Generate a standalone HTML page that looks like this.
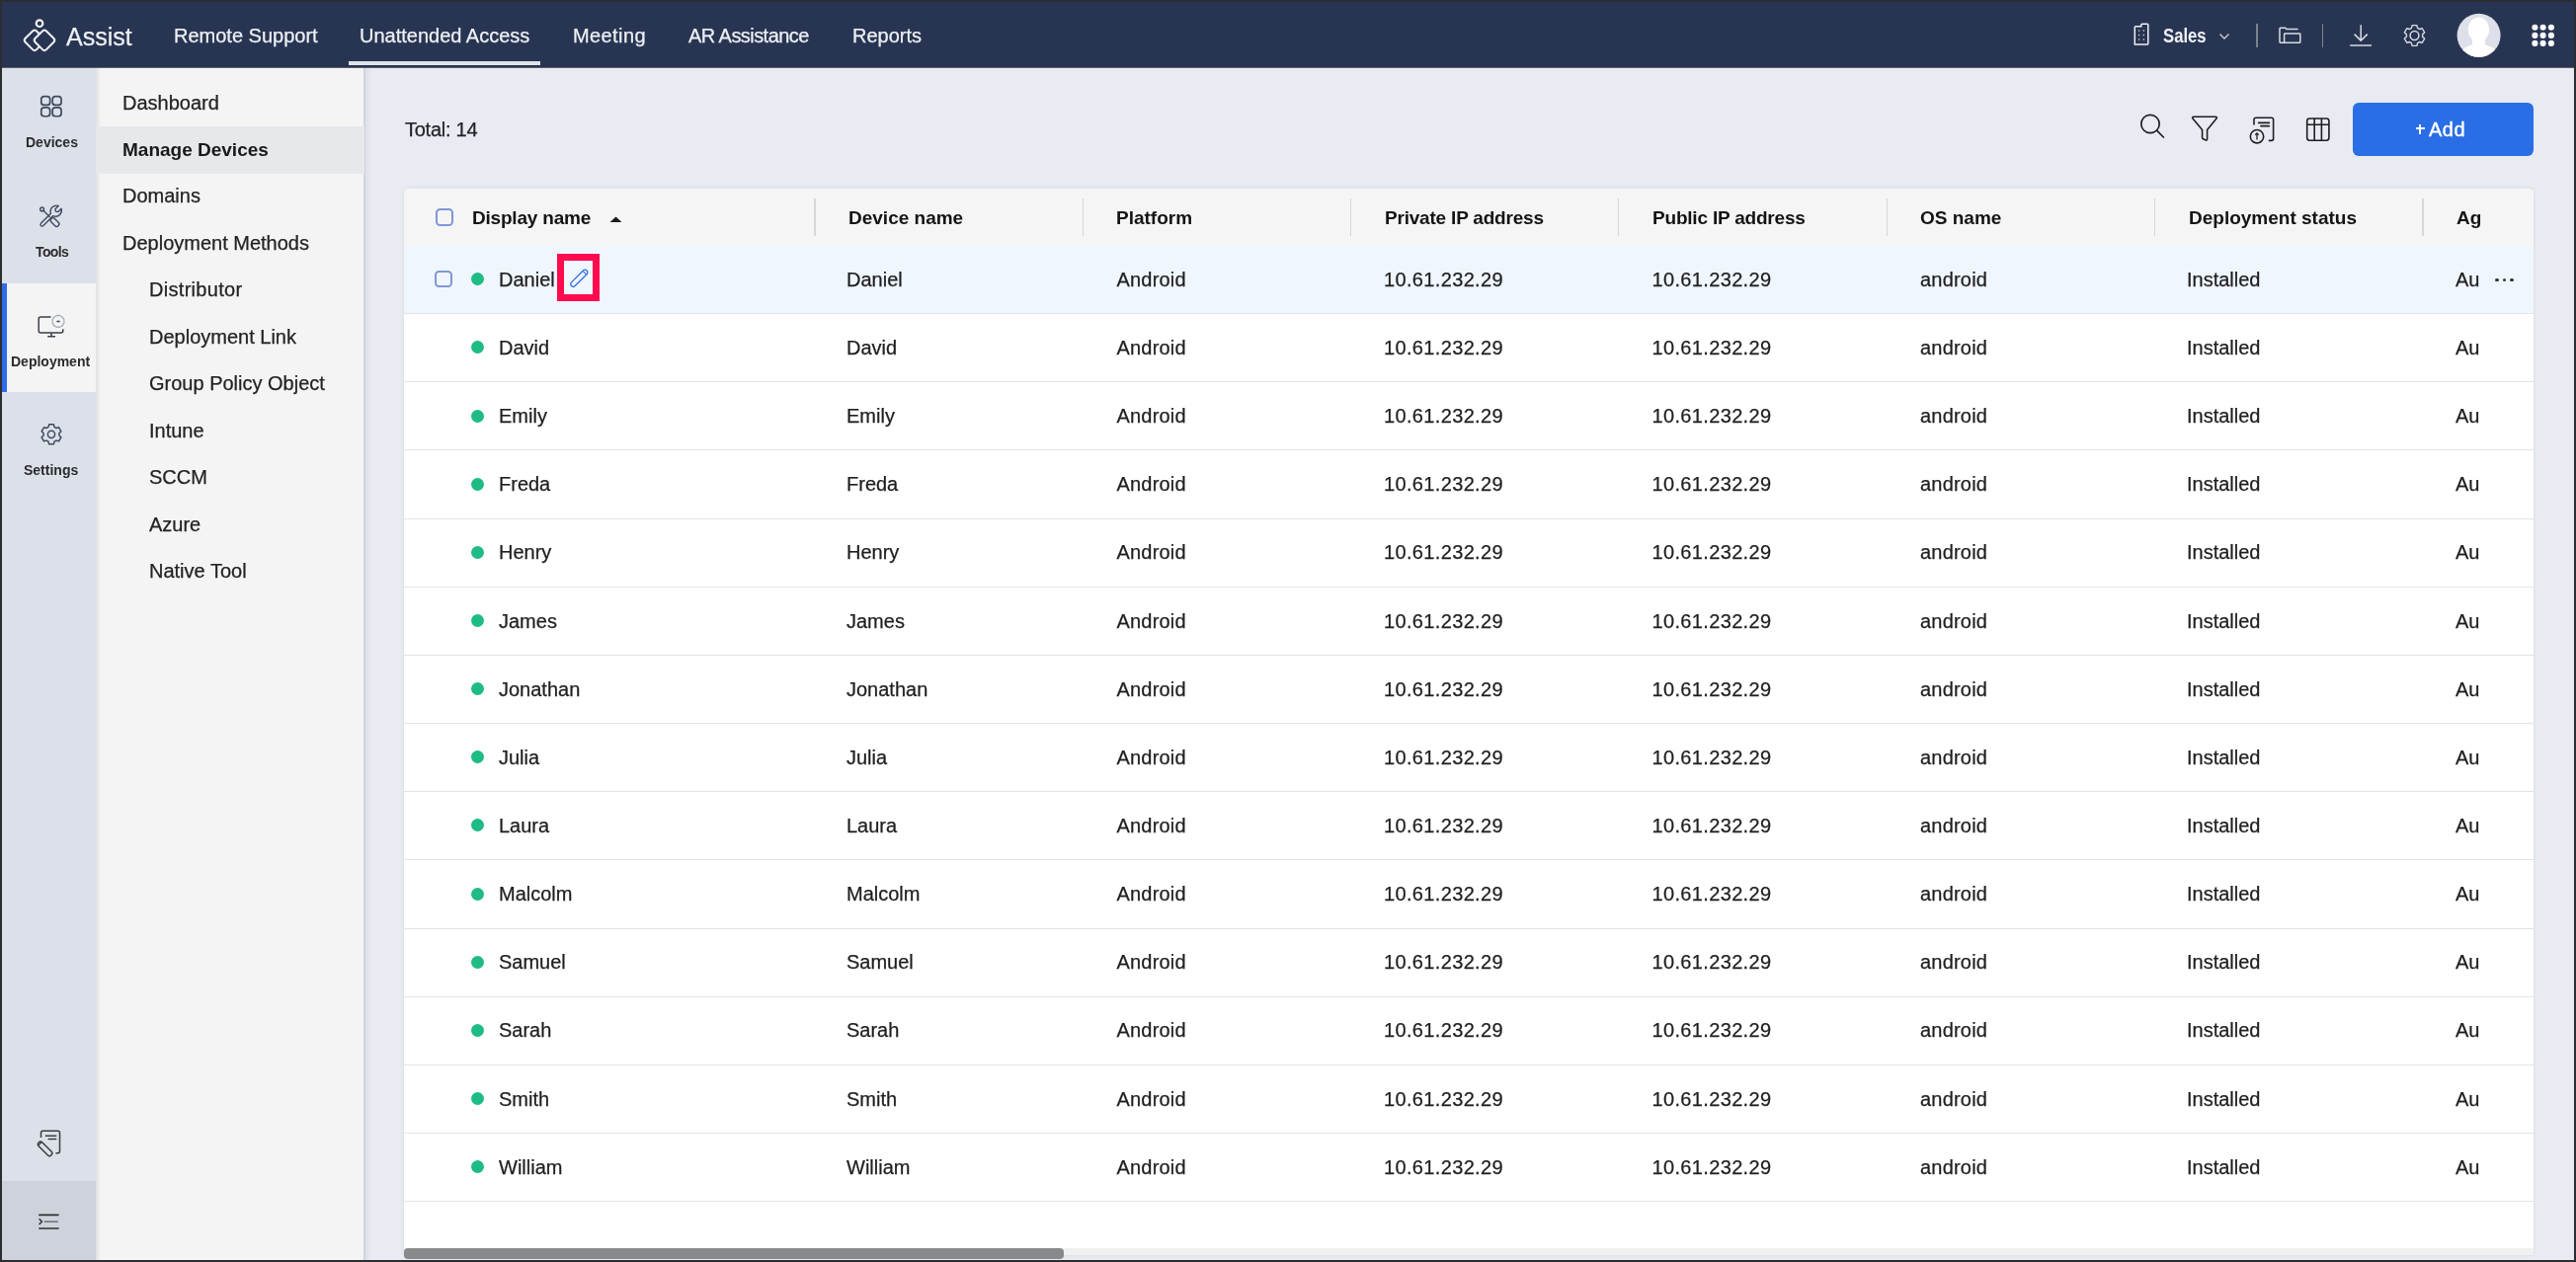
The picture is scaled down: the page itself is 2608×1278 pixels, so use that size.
<!DOCTYPE html>
<html><head><meta charset="utf-8"><style>
*{margin:0;padding:0;box-sizing:border-box}
html,body{width:2608px;height:1278px;overflow:hidden;background:#2c2d31;font-family:"Liberation Sans",sans-serif}
.t{position:absolute;white-space:nowrap;color:#1f1f21;-webkit-text-stroke:0.25px currentColor}
.b{-webkit-text-stroke:0}
.r{position:absolute}
svg{position:absolute;overflow:visible}
</style></head><body><div id="root" style="position:absolute;left:0;top:0;width:2608px;height:1278px;will-change:transform">
<div class="r" style="left:2px;top:2px;width:2604px;height:66px;background:#283552;"></div>
<div class="r" style="left:2px;top:68px;width:95px;height:1208px;background:#dce0e8;"></div>
<div class="r" style="left:2px;top:1196px;width:95px;height:80px;background:#ced2db;"></div>
<div class="r" style="left:97px;top:68px;width:272px;height:1208px;background:#f4f4f4;"></div>
<div class="r" style="left:97px;top:68px;width:5px;height:1208px;background:linear-gradient(90deg,#dfe0e3,#f4f4f4);"></div>
<div class="r" style="left:369px;top:68px;width:2237px;height:1208px;background:#e8ebf2;"></div>
<div class="r" style="left:368px;top:68px;width:2px;height:1208px;background:#d3d5da;"></div>
<div class="r" style="left:370px;top:68px;width:6px;height:1208px;background:linear-gradient(90deg,#dde0e7,#e8ebf2);"></div>
<div class="r" style="left:2px;top:68px;width:2604px;height:1px;background:#5d6068;"></div>
<div class="t" style="left:67px;top:25px;font-size:25px;line-height:25px;color:#eef0f4;">Assist</div>
<div class="t" style="left:176px;top:26px;font-size:20px;line-height:20px;color:#eef0f4;letter-spacing:0px">Remote Support</div>
<div class="t" style="left:364px;top:26px;font-size:20px;line-height:20px;color:#eef0f4;letter-spacing:0px">Unattended Access</div>
<div class="t" style="left:580px;top:26px;font-size:20px;line-height:20px;color:#eef0f4;letter-spacing:0.4px">Meeting</div>
<div class="t" style="left:697px;top:26px;font-size:20px;line-height:20px;color:#eef0f4;letter-spacing:-0.55px">AR Assistance</div>
<div class="t" style="left:863px;top:26px;font-size:20px;line-height:20px;color:#eef0f4;letter-spacing:0px">Reports</div>
<div class="r" style="left:353px;top:62px;width:194px;height:4px;background:#dfe4ec;"></div>
<div class="t b" style="left:2190px;top:26px;font-size:20px;line-height:20px;font-weight:bold;color:#eef0f4;transform:scaleX(0.835);transform-origin:0 0">Sales</div>
<div class="r" style="left:2284.2px;top:24px;width:1.6px;height:24px;background:#7d828c;"></div>
<div class="r" style="left:2350.8px;top:23.5px;width:1.6px;height:24.5px;background:#7d828c;"></div>
<div class="r" style="left:97px;top:128px;width:272px;height:48px;background:#e6e8ec;"></div>
<div class="t" style="left:124px;top:94px;font-size:20px;line-height:20px;color:#222325;">Dashboard</div>
<div class="t b" style="left:124px;top:142px;font-size:19px;line-height:19px;font-weight:bold;color:#18191b;">Manage Devices</div>
<div class="t" style="left:124px;top:188px;font-size:20px;line-height:20px;color:#222325;">Domains</div>
<div class="t" style="left:124px;top:236px;font-size:20px;line-height:20px;color:#222325;">Deployment Methods</div>
<div class="t" style="left:151px;top:283px;font-size:20px;line-height:20px;color:#222325;letter-spacing:0.3px">Distributor</div>
<div class="t" style="left:151px;top:331px;font-size:20px;line-height:20px;color:#222325;">Deployment Link</div>
<div class="t" style="left:151px;top:378px;font-size:20px;line-height:20px;color:#222325;">Group Policy Object</div>
<div class="t" style="left:151px;top:426px;font-size:20px;line-height:20px;color:#222325;">Intune</div>
<div class="t" style="left:151px;top:473px;font-size:20px;line-height:20px;color:#222325;">SCCM</div>
<div class="t" style="left:151px;top:521px;font-size:20px;line-height:20px;color:#222325;">Azure</div>
<div class="t" style="left:151px;top:568px;font-size:20px;line-height:20px;color:#222325;">Native Tool</div>
<div class="r" style="left:2px;top:287px;width:95px;height:110px;background:#f4f4f4;"></div>
<div class="r" style="left:2px;top:287px;width:5px;height:110px;background:#2f6bea;"></div>
<div class="t b" style="left:26px;top:137px;font-size:14px;line-height:14px;font-weight:bold;color:#2a2b2e;letter-spacing:0px">Devices</div>
<div class="t b" style="left:36px;top:248px;font-size:14px;line-height:14px;font-weight:bold;color:#2a2b2e;letter-spacing:-0.6px">Tools</div>
<div class="t b" style="left:11px;top:359px;font-size:14px;line-height:14px;font-weight:bold;color:#2a2b2e;letter-spacing:0px">Deployment</div>
<div class="t b" style="left:24px;top:469px;font-size:14px;line-height:14px;font-weight:bold;color:#2a2b2e;letter-spacing:0px">Settings</div>
<div class="t" style="left:410px;top:121px;font-size:20px;line-height:20px;color:#222325;letter-spacing:-0.25px">Total: 14</div>
<div class="r" style="left:2382px;top:104px;width:183px;height:54px;background:#2a6ee6;border-radius:6px"></div>
<div class="r" style="left:2445.5px;top:129.4px;width:9.5px;height:2px;background:#ffffff;"></div>
<div class="r" style="left:2449.3px;top:125.6px;width:2px;height:10.4px;background:#ffffff;"></div>
<div class="t" style="left:2459px;top:121px;font-size:20px;line-height:20px;color:#ffffff;-webkit-text-stroke:0.4px #fff;letter-spacing:0.5px">Add</div>
<div class="r" style="left:409px;top:191px;width:2156px;height:1080px;background:#ffffff;border-radius:5px 5px 0 0;box-shadow:0 0 0 1px #e1e3e8,0 0 5px rgba(40,50,80,0.07)"></div>
<div class="r" style="left:409px;top:191px;width:2156px;height:58px;background:#f5f5f5;border-radius:5px 5px 0 0"></div>
<div class="r" style="left:824.4px;top:201px;width:1.2px;height:38px;background:#d6d7d9;"></div>
<div class="r" style="left:1095.7px;top:201px;width:1.2px;height:38px;background:#d6d7d9;"></div>
<div class="r" style="left:1367.1000000000001px;top:201px;width:1.2px;height:38px;background:#d6d7d9;"></div>
<div class="r" style="left:1638.2px;top:201px;width:1.2px;height:38px;background:#d6d7d9;"></div>
<div class="r" style="left:1909.8000000000002px;top:201px;width:1.2px;height:38px;background:#d6d7d9;"></div>
<div class="r" style="left:2181.1px;top:201px;width:1.2px;height:38px;background:#d6d7d9;"></div>
<div class="r" style="left:2452.4px;top:201px;width:1.2px;height:38px;background:#d6d7d9;"></div>
<div class="t b" style="left:478px;top:211px;font-size:19px;line-height:19px;font-weight:bold;color:#141416;letter-spacing:-0.2px">Display name</div>
<div class="t b" style="left:859px;top:211px;font-size:19px;line-height:19px;font-weight:bold;color:#141416;letter-spacing:0px">Device name</div>
<div class="t b" style="left:1130px;top:211px;font-size:19px;line-height:19px;font-weight:bold;color:#141416;letter-spacing:0px">Platform</div>
<div class="t b" style="left:1402px;top:211px;font-size:19px;line-height:19px;font-weight:bold;color:#141416;letter-spacing:-0.2px">Private IP address</div>
<div class="t b" style="left:1673px;top:211px;font-size:19px;line-height:19px;font-weight:bold;color:#141416;letter-spacing:-0.2px">Public IP address</div>
<div class="t b" style="left:1944px;top:211px;font-size:19px;line-height:19px;font-weight:bold;color:#141416;letter-spacing:0px">OS name</div>
<div class="t b" style="left:2216px;top:211px;font-size:19px;line-height:19px;font-weight:bold;color:#141416;letter-spacing:0px">Deployment status</div>
<div class="t b" style="left:2487px;top:211px;font-size:19px;line-height:19px;font-weight:bold;color:#141416;letter-spacing:0px">Ag</div>
<div class="r" style="left:409px;top:249px;width:2156px;height:68px;background:#f0f6fd;"></div>
<div class="r" style="left:409px;top:316.5px;width:2156px;height:1.5px;background:#e2e4e7;"></div>
<div class="r" style="left:477px;top:276px;width:13px;height:13px;background:#1fbb84;border-radius:50%"></div>
<div class="t" style="left:505px;top:273px;font-size:20px;line-height:20px;">Daniel</div>
<div class="t" style="left:857px;top:273px;font-size:20px;line-height:20px;">Daniel</div>
<div class="t" style="left:1130.5px;top:273px;font-size:20px;line-height:20px;letter-spacing:0.2px">Android</div>
<div class="t" style="left:1401px;top:273px;font-size:20px;line-height:20px;letter-spacing:0.35px">10.61.232.29</div>
<div class="t" style="left:1672.5px;top:273px;font-size:20px;line-height:20px;letter-spacing:0.35px">10.61.232.29</div>
<div class="t" style="left:1944px;top:273px;font-size:20px;line-height:20px;letter-spacing:0.2px">android</div>
<div class="t" style="left:2214px;top:273px;font-size:20px;line-height:20px;">Installed</div>
<div class="t" style="left:2486px;top:273px;font-size:20px;line-height:20px;">Au</div>
<div class="r" style="left:409px;top:385.5px;width:2156px;height:1.5px;background:#e2e4e7;"></div>
<div class="r" style="left:477px;top:345px;width:13px;height:13px;background:#1fbb84;border-radius:50%"></div>
<div class="t" style="left:505px;top:342px;font-size:20px;line-height:20px;">David</div>
<div class="t" style="left:857px;top:342px;font-size:20px;line-height:20px;">David</div>
<div class="t" style="left:1130.5px;top:342px;font-size:20px;line-height:20px;letter-spacing:0.2px">Android</div>
<div class="t" style="left:1401px;top:342px;font-size:20px;line-height:20px;letter-spacing:0.35px">10.61.232.29</div>
<div class="t" style="left:1672.5px;top:342px;font-size:20px;line-height:20px;letter-spacing:0.35px">10.61.232.29</div>
<div class="t" style="left:1944px;top:342px;font-size:20px;line-height:20px;letter-spacing:0.2px">android</div>
<div class="t" style="left:2214px;top:342px;font-size:20px;line-height:20px;">Installed</div>
<div class="t" style="left:2486px;top:342px;font-size:20px;line-height:20px;">Au</div>
<div class="r" style="left:409px;top:454.5px;width:2156px;height:1.5px;background:#e2e4e7;"></div>
<div class="r" style="left:477px;top:415px;width:13px;height:13px;background:#1fbb84;border-radius:50%"></div>
<div class="t" style="left:505px;top:411px;font-size:20px;line-height:20px;">Emily</div>
<div class="t" style="left:857px;top:411px;font-size:20px;line-height:20px;">Emily</div>
<div class="t" style="left:1130.5px;top:411px;font-size:20px;line-height:20px;letter-spacing:0.2px">Android</div>
<div class="t" style="left:1401px;top:411px;font-size:20px;line-height:20px;letter-spacing:0.35px">10.61.232.29</div>
<div class="t" style="left:1672.5px;top:411px;font-size:20px;line-height:20px;letter-spacing:0.35px">10.61.232.29</div>
<div class="t" style="left:1944px;top:411px;font-size:20px;line-height:20px;letter-spacing:0.2px">android</div>
<div class="t" style="left:2214px;top:411px;font-size:20px;line-height:20px;">Installed</div>
<div class="t" style="left:2486px;top:411px;font-size:20px;line-height:20px;">Au</div>
<div class="r" style="left:409px;top:524.5px;width:2156px;height:1.5px;background:#e2e4e7;"></div>
<div class="r" style="left:477px;top:484px;width:13px;height:13px;background:#1fbb84;border-radius:50%"></div>
<div class="t" style="left:505px;top:480px;font-size:20px;line-height:20px;">Freda</div>
<div class="t" style="left:857px;top:480px;font-size:20px;line-height:20px;">Freda</div>
<div class="t" style="left:1130.5px;top:480px;font-size:20px;line-height:20px;letter-spacing:0.2px">Android</div>
<div class="t" style="left:1401px;top:480px;font-size:20px;line-height:20px;letter-spacing:0.35px">10.61.232.29</div>
<div class="t" style="left:1672.5px;top:480px;font-size:20px;line-height:20px;letter-spacing:0.35px">10.61.232.29</div>
<div class="t" style="left:1944px;top:480px;font-size:20px;line-height:20px;letter-spacing:0.2px">android</div>
<div class="t" style="left:2214px;top:480px;font-size:20px;line-height:20px;">Installed</div>
<div class="t" style="left:2486px;top:480px;font-size:20px;line-height:20px;">Au</div>
<div class="r" style="left:409px;top:593.5px;width:2156px;height:1.5px;background:#e2e4e7;"></div>
<div class="r" style="left:477px;top:553px;width:13px;height:13px;background:#1fbb84;border-radius:50%"></div>
<div class="t" style="left:505px;top:549px;font-size:20px;line-height:20px;">Henry</div>
<div class="t" style="left:857px;top:549px;font-size:20px;line-height:20px;">Henry</div>
<div class="t" style="left:1130.5px;top:549px;font-size:20px;line-height:20px;letter-spacing:0.2px">Android</div>
<div class="t" style="left:1401px;top:549px;font-size:20px;line-height:20px;letter-spacing:0.35px">10.61.232.29</div>
<div class="t" style="left:1672.5px;top:549px;font-size:20px;line-height:20px;letter-spacing:0.35px">10.61.232.29</div>
<div class="t" style="left:1944px;top:549px;font-size:20px;line-height:20px;letter-spacing:0.2px">android</div>
<div class="t" style="left:2214px;top:549px;font-size:20px;line-height:20px;">Installed</div>
<div class="t" style="left:2486px;top:549px;font-size:20px;line-height:20px;">Au</div>
<div class="r" style="left:409px;top:662.5px;width:2156px;height:1.5px;background:#e2e4e7;"></div>
<div class="r" style="left:477px;top:622px;width:13px;height:13px;background:#1fbb84;border-radius:50%"></div>
<div class="t" style="left:505px;top:619px;font-size:20px;line-height:20px;">James</div>
<div class="t" style="left:857px;top:619px;font-size:20px;line-height:20px;">James</div>
<div class="t" style="left:1130.5px;top:619px;font-size:20px;line-height:20px;letter-spacing:0.2px">Android</div>
<div class="t" style="left:1401px;top:619px;font-size:20px;line-height:20px;letter-spacing:0.35px">10.61.232.29</div>
<div class="t" style="left:1672.5px;top:619px;font-size:20px;line-height:20px;letter-spacing:0.35px">10.61.232.29</div>
<div class="t" style="left:1944px;top:619px;font-size:20px;line-height:20px;letter-spacing:0.2px">android</div>
<div class="t" style="left:2214px;top:619px;font-size:20px;line-height:20px;">Installed</div>
<div class="t" style="left:2486px;top:619px;font-size:20px;line-height:20px;">Au</div>
<div class="r" style="left:409px;top:731.5px;width:2156px;height:1.5px;background:#e2e4e7;"></div>
<div class="r" style="left:477px;top:691px;width:13px;height:13px;background:#1fbb84;border-radius:50%"></div>
<div class="t" style="left:505px;top:688px;font-size:20px;line-height:20px;">Jonathan</div>
<div class="t" style="left:857px;top:688px;font-size:20px;line-height:20px;">Jonathan</div>
<div class="t" style="left:1130.5px;top:688px;font-size:20px;line-height:20px;letter-spacing:0.2px">Android</div>
<div class="t" style="left:1401px;top:688px;font-size:20px;line-height:20px;letter-spacing:0.35px">10.61.232.29</div>
<div class="t" style="left:1672.5px;top:688px;font-size:20px;line-height:20px;letter-spacing:0.35px">10.61.232.29</div>
<div class="t" style="left:1944px;top:688px;font-size:20px;line-height:20px;letter-spacing:0.2px">android</div>
<div class="t" style="left:2214px;top:688px;font-size:20px;line-height:20px;">Installed</div>
<div class="t" style="left:2486px;top:688px;font-size:20px;line-height:20px;">Au</div>
<div class="r" style="left:409px;top:800.5px;width:2156px;height:1.5px;background:#e2e4e7;"></div>
<div class="r" style="left:477px;top:760px;width:13px;height:13px;background:#1fbb84;border-radius:50%"></div>
<div class="t" style="left:505px;top:757px;font-size:20px;line-height:20px;">Julia</div>
<div class="t" style="left:857px;top:757px;font-size:20px;line-height:20px;">Julia</div>
<div class="t" style="left:1130.5px;top:757px;font-size:20px;line-height:20px;letter-spacing:0.2px">Android</div>
<div class="t" style="left:1401px;top:757px;font-size:20px;line-height:20px;letter-spacing:0.35px">10.61.232.29</div>
<div class="t" style="left:1672.5px;top:757px;font-size:20px;line-height:20px;letter-spacing:0.35px">10.61.232.29</div>
<div class="t" style="left:1944px;top:757px;font-size:20px;line-height:20px;letter-spacing:0.2px">android</div>
<div class="t" style="left:2214px;top:757px;font-size:20px;line-height:20px;">Installed</div>
<div class="t" style="left:2486px;top:757px;font-size:20px;line-height:20px;">Au</div>
<div class="r" style="left:409px;top:869.5px;width:2156px;height:1.5px;background:#e2e4e7;"></div>
<div class="r" style="left:477px;top:829px;width:13px;height:13px;background:#1fbb84;border-radius:50%"></div>
<div class="t" style="left:505px;top:826px;font-size:20px;line-height:20px;">Laura</div>
<div class="t" style="left:857px;top:826px;font-size:20px;line-height:20px;">Laura</div>
<div class="t" style="left:1130.5px;top:826px;font-size:20px;line-height:20px;letter-spacing:0.2px">Android</div>
<div class="t" style="left:1401px;top:826px;font-size:20px;line-height:20px;letter-spacing:0.35px">10.61.232.29</div>
<div class="t" style="left:1672.5px;top:826px;font-size:20px;line-height:20px;letter-spacing:0.35px">10.61.232.29</div>
<div class="t" style="left:1944px;top:826px;font-size:20px;line-height:20px;letter-spacing:0.2px">android</div>
<div class="t" style="left:2214px;top:826px;font-size:20px;line-height:20px;">Installed</div>
<div class="t" style="left:2486px;top:826px;font-size:20px;line-height:20px;">Au</div>
<div class="r" style="left:409px;top:939.5px;width:2156px;height:1.5px;background:#e2e4e7;"></div>
<div class="r" style="left:477px;top:899px;width:13px;height:13px;background:#1fbb84;border-radius:50%"></div>
<div class="t" style="left:505px;top:895px;font-size:20px;line-height:20px;">Malcolm</div>
<div class="t" style="left:857px;top:895px;font-size:20px;line-height:20px;">Malcolm</div>
<div class="t" style="left:1130.5px;top:895px;font-size:20px;line-height:20px;letter-spacing:0.2px">Android</div>
<div class="t" style="left:1401px;top:895px;font-size:20px;line-height:20px;letter-spacing:0.35px">10.61.232.29</div>
<div class="t" style="left:1672.5px;top:895px;font-size:20px;line-height:20px;letter-spacing:0.35px">10.61.232.29</div>
<div class="t" style="left:1944px;top:895px;font-size:20px;line-height:20px;letter-spacing:0.2px">android</div>
<div class="t" style="left:2214px;top:895px;font-size:20px;line-height:20px;">Installed</div>
<div class="t" style="left:2486px;top:895px;font-size:20px;line-height:20px;">Au</div>
<div class="r" style="left:409px;top:1008.5px;width:2156px;height:1.5px;background:#e2e4e7;"></div>
<div class="r" style="left:477px;top:968px;width:13px;height:13px;background:#1fbb84;border-radius:50%"></div>
<div class="t" style="left:505px;top:964px;font-size:20px;line-height:20px;">Samuel</div>
<div class="t" style="left:857px;top:964px;font-size:20px;line-height:20px;">Samuel</div>
<div class="t" style="left:1130.5px;top:964px;font-size:20px;line-height:20px;letter-spacing:0.2px">Android</div>
<div class="t" style="left:1401px;top:964px;font-size:20px;line-height:20px;letter-spacing:0.35px">10.61.232.29</div>
<div class="t" style="left:1672.5px;top:964px;font-size:20px;line-height:20px;letter-spacing:0.35px">10.61.232.29</div>
<div class="t" style="left:1944px;top:964px;font-size:20px;line-height:20px;letter-spacing:0.2px">android</div>
<div class="t" style="left:2214px;top:964px;font-size:20px;line-height:20px;">Installed</div>
<div class="t" style="left:2486px;top:964px;font-size:20px;line-height:20px;">Au</div>
<div class="r" style="left:409px;top:1077.5px;width:2156px;height:1.5px;background:#e2e4e7;"></div>
<div class="r" style="left:477px;top:1037px;width:13px;height:13px;background:#1fbb84;border-radius:50%"></div>
<div class="t" style="left:505px;top:1033px;font-size:20px;line-height:20px;">Sarah</div>
<div class="t" style="left:857px;top:1033px;font-size:20px;line-height:20px;">Sarah</div>
<div class="t" style="left:1130.5px;top:1033px;font-size:20px;line-height:20px;letter-spacing:0.2px">Android</div>
<div class="t" style="left:1401px;top:1033px;font-size:20px;line-height:20px;letter-spacing:0.35px">10.61.232.29</div>
<div class="t" style="left:1672.5px;top:1033px;font-size:20px;line-height:20px;letter-spacing:0.35px">10.61.232.29</div>
<div class="t" style="left:1944px;top:1033px;font-size:20px;line-height:20px;letter-spacing:0.2px">android</div>
<div class="t" style="left:2214px;top:1033px;font-size:20px;line-height:20px;">Installed</div>
<div class="t" style="left:2486px;top:1033px;font-size:20px;line-height:20px;">Au</div>
<div class="r" style="left:409px;top:1146.5px;width:2156px;height:1.5px;background:#e2e4e7;"></div>
<div class="r" style="left:477px;top:1106px;width:13px;height:13px;background:#1fbb84;border-radius:50%"></div>
<div class="t" style="left:505px;top:1103px;font-size:20px;line-height:20px;">Smith</div>
<div class="t" style="left:857px;top:1103px;font-size:20px;line-height:20px;">Smith</div>
<div class="t" style="left:1130.5px;top:1103px;font-size:20px;line-height:20px;letter-spacing:0.2px">Android</div>
<div class="t" style="left:1401px;top:1103px;font-size:20px;line-height:20px;letter-spacing:0.35px">10.61.232.29</div>
<div class="t" style="left:1672.5px;top:1103px;font-size:20px;line-height:20px;letter-spacing:0.35px">10.61.232.29</div>
<div class="t" style="left:1944px;top:1103px;font-size:20px;line-height:20px;letter-spacing:0.2px">android</div>
<div class="t" style="left:2214px;top:1103px;font-size:20px;line-height:20px;">Installed</div>
<div class="t" style="left:2486px;top:1103px;font-size:20px;line-height:20px;">Au</div>
<div class="r" style="left:409px;top:1215.5px;width:2156px;height:1.5px;background:#e2e4e7;"></div>
<div class="r" style="left:477px;top:1175px;width:13px;height:13px;background:#1fbb84;border-radius:50%"></div>
<div class="t" style="left:505px;top:1172px;font-size:20px;line-height:20px;">William</div>
<div class="t" style="left:857px;top:1172px;font-size:20px;line-height:20px;">William</div>
<div class="t" style="left:1130.5px;top:1172px;font-size:20px;line-height:20px;letter-spacing:0.2px">Android</div>
<div class="t" style="left:1401px;top:1172px;font-size:20px;line-height:20px;letter-spacing:0.35px">10.61.232.29</div>
<div class="t" style="left:1672.5px;top:1172px;font-size:20px;line-height:20px;letter-spacing:0.35px">10.61.232.29</div>
<div class="t" style="left:1944px;top:1172px;font-size:20px;line-height:20px;letter-spacing:0.2px">android</div>
<div class="t" style="left:2214px;top:1172px;font-size:20px;line-height:20px;">Installed</div>
<div class="t" style="left:2486px;top:1172px;font-size:20px;line-height:20px;">Au</div>
<div class="r" style="left:441px;top:211px;width:18px;height:18px;background:transparent;border:2px solid #7f97d6;border-radius:4.5px"></div>
<div class="r" style="left:440px;top:274px;width:18px;height:17px;background:transparent;border:2px solid #7f97d6;border-radius:4.5px"></div>
<svg style="left:617px;top:219px" width="13" height="7"><path d="M0.5 6 L6.5 0.6 L12.5 6Z" fill="#1a1a1a"/></svg>
<div class="r" style="left:2526.3px;top:281.5px;width:3.4px;height:3.4px;background:#333;border-radius:50%"></div>
<div class="r" style="left:2533.8px;top:281.5px;width:3.4px;height:3.4px;background:#333;border-radius:50%"></div>
<div class="r" style="left:2541.3px;top:281.5px;width:3.4px;height:3.4px;background:#333;border-radius:50%"></div>
<div class="r" style="left:564px;top:257.2px;width:43.4px;height:47.4px;background:transparent;border:7.2px solid #fe0b4f"></div>
<div class="r" style="left:409px;top:1264px;width:2156px;height:7px;background:#f0f0f0;"></div>
<div class="r" style="left:409px;top:1264px;width:668px;height:10.6px;background:#88898c;border-radius:4px"></div>
<svg style="left:0;top:0" width="2608" height="1278" viewBox="0 0 2608 1278"><circle cx="40" cy="23.7" r="3.3" fill="none" stroke="#eef0f4" stroke-width="2.2"/><rect x="-8" y="-8" width="16" height="16" rx="2.8" transform="translate(35 40.8) rotate(45)" fill="none" stroke="#eef0f4" stroke-width="2"/><rect x="-8" y="-8" width="16" height="16" rx="2.8" transform="translate(45 40.8) rotate(45)" fill="#283552" stroke="#eef0f4" stroke-width="2"/><path d="M2161.3 44.9 V27.6 Q2161.3 26.8 2162.1 26.8 H2167.8 V25.1 Q2167.8 24.3 2168.6 24.3 H2174 Q2174.8 24.3 2174.8 25.1 V44.1 Q2174.8 44.9 2174 44.9 Z" fill="none" stroke="#eef0f4" stroke-width="1.5"/><rect x="2165.0" y="30.25" width="1.2" height="1.5" fill="#c9cdd6"/><rect x="2165.0" y="34.75" width="1.2" height="1.5" fill="#c9cdd6"/><rect x="2165.0" y="39.25" width="1.2" height="1.5" fill="#c9cdd6"/><rect x="2169.8" y="30.25" width="1.2" height="1.5" fill="#c9cdd6"/><rect x="2169.8" y="34.75" width="1.2" height="1.5" fill="#c9cdd6"/><rect x="2169.8" y="39.25" width="1.2" height="1.5" fill="#c9cdd6"/><path d="M2247.5 34.6 L2252 39 L2256.5 34.6" fill="none" stroke="#c9cdd6" stroke-width="1.4"/><path d="M2308 43.3 V29 Q2308 28.2 2308.8 28.2 H2313.5 L2315 29.4 H2326.5" fill="none" stroke="#d8dbe2" stroke-width="1.5"/><path d="M2308 43.3 H2328.2 Q2328.8 43.3 2328.8 42.6 V34.6 Q2328.8 33.9 2328.1 33.9 H2313.3 Q2312.6 33.9 2312.6 34.6 V43.3" fill="none" stroke="#d8dbe2" stroke-width="1.5"/><path d="M2390.2 25.3 V41 M2383.6 34.6 L2390.2 41.1 L2396.8 34.6 M2379.2 45.9 H2401" fill="none" stroke="#d8dbe2" stroke-width="1.5"/><path d="M2441.43 28.40 L2442.12 25.67 L2446.88 25.67 L2447.57 28.40 L2449.55 29.54 L2452.25 28.77 L2454.64 32.90 L2452.62 34.86 L2452.62 37.14 L2454.64 39.10 L2452.25 43.23 L2449.55 42.46 L2447.57 43.60 L2446.88 46.33 L2442.12 46.33 L2441.43 43.60 L2439.45 42.46 L2436.75 43.23 L2434.36 39.10 L2436.38 37.14 L2436.38 34.86 L2434.36 32.90 L2436.75 28.77 L2439.45 29.54 Z" fill="none" stroke="#d8dbe2" stroke-width="1.4" stroke-linejoin="round"/><circle cx="2444.5" cy="36" r="4.4" fill="none" stroke="#d8dbe2" stroke-width="1.5"/><defs><clipPath id="av"><circle cx="2509.6" cy="35.8" r="22"/></clipPath></defs><circle cx="2509.6" cy="35.8" r="22" fill="#dde0e8"/><g clip-path="url(#av)" fill="#ffffff"><ellipse cx="2509.4" cy="30" rx="10.6" ry="12.6"/><ellipse cx="2509.6" cy="60" rx="21" ry="15.5"/><rect x="2503" y="38" width="13" height="10"/></g><circle cx="2566.4" cy="27.8" r="3.05" fill="#ffffff"/><circle cx="2566.4" cy="35.9" r="3.05" fill="#ffffff"/><circle cx="2566.4" cy="43.9" r="3.05" fill="#ffffff"/><circle cx="2574.6" cy="27.8" r="3.05" fill="#ffffff"/><circle cx="2574.6" cy="35.9" r="3.05" fill="#ffffff"/><circle cx="2574.6" cy="43.9" r="3.05" fill="#ffffff"/><circle cx="2582.9" cy="27.8" r="3.05" fill="#ffffff"/><circle cx="2582.9" cy="35.9" r="3.05" fill="#ffffff"/><circle cx="2582.9" cy="43.9" r="3.05" fill="#ffffff"/><rect x="41.75" y="97.65" width="8.9" height="8.8" rx="3" fill="none" stroke="#3f4a60" stroke-width="1.7"/><rect x="53.15" y="97.65" width="8.9" height="8.8" rx="3" fill="none" stroke="#3f4a60" stroke-width="1.7"/><rect x="41.75" y="108.95" width="8.9" height="8.8" rx="3" fill="none" stroke="#3f4a60" stroke-width="1.7"/><rect x="53.15" y="108.95" width="8.9" height="8.8" rx="3" fill="none" stroke="#3f4a60" stroke-width="1.7"/><path d="M43.3 212.6 L50.6 219.9" fill="none" stroke="#3f4a60" stroke-width="1.4"/><circle cx="42.6" cy="211.9" r="1.9" fill="none" stroke="#3f4a60" stroke-width="1.4"/><rect x="-2.4" y="-5" width="4.8" height="10" rx="2.2" transform="translate(55.5 225) rotate(-45)" fill="none" stroke="#3f4a60" stroke-width="1.4"/><path d="M53.8 218.6 L44.2 228.2 Q42.5 229.9 41.4 228.6 Q40.3 227.3 41.8 225.8 L51.4 216.2 Q50.2 212.6 53 209.8 Q55.6 207.4 59.2 208.4 L55.9 211.7 L56.4 214.1 L58.8 214.6 L62.1 211.3 Q63.1 214.9 60.6 217.5 Q57.8 220.2 53.8 218.6 Z" fill="none" stroke="#3f4a60" stroke-width="1.4" stroke-linejoin="round"/><path d="M51.6 321 H41.2 Q39.2 321 39.2 323 V335 Q39.2 337 41.2 337 H61.8 Q63.8 337 63.8 335 V333.2 M52 337 V340.5 M48.2 340.8 H56" fill="none" stroke="#3a3f4b" stroke-width="1.5"/><path d="M63.94 322.77 L64.83 323.28 L64.83 327.52 L63.94 328.03 L63.75 328.37 L63.75 329.39 L60.08 331.51 L59.20 331.00 L58.80 331.00 L57.92 331.51 L54.25 329.39 L54.25 328.37 L54.06 328.03 L53.17 327.52 L53.17 323.28 L54.06 322.77 L54.25 322.43 L54.25 321.41 L57.92 319.29 L58.80 319.80 L59.20 319.80 L60.08 319.29 L63.75 321.41 L63.75 322.43 Z" fill="none" stroke="#a4a9b3" stroke-width="1.2" stroke-linejoin="round"/><path d="M56.9 325.4 Q59 323.4 61.1 325.4 Q59 327.4 56.9 325.4 Z" fill="#4a5066"/><path d="M49.00 432.38 L49.68 429.76 L54.32 429.76 L55.00 432.38 L56.93 433.50 L59.53 432.78 L61.85 436.79 L59.92 438.69 L59.92 440.91 L61.85 442.81 L59.53 446.82 L56.93 446.10 L55.00 447.22 L54.32 449.84 L49.68 449.84 L49.00 447.22 L47.07 446.10 L44.47 446.82 L42.15 442.81 L44.08 440.91 L44.08 438.69 L42.15 436.79 L44.47 432.78 L47.07 433.50 Z" fill="none" stroke="#3f4a60" stroke-width="1.5" stroke-linejoin="round"/><circle cx="52" cy="439.8" r="3.6" fill="none" stroke="#3f4a60" stroke-width="1.5"/><path d="M41.5 1152 V1147.2 Q41.5 1145.3 43.4 1145.3 H58.6 Q60.5 1145.3 60.5 1147.2 V1165.8 Q60.5 1167.7 58.6 1167.7 H56.4 M45.8 1150.3 H57.3 M48.6 1153.4 H57.3" fill="none" stroke="#3b3d42" stroke-width="1.5"/><rect x="-2.6" y="-9" width="5.2" height="18" rx="2.6" transform="translate(45.6 1163.4) rotate(-45)" fill="none" stroke="#3b3d42" stroke-width="1.5"/><path d="M38.9 1159.8 L42.2 1156.5" stroke="#3b3d42" stroke-width="1.2"/><path d="M39.2 1230.4 H59.6 M39.2 1244 H59.6" stroke="#2f3034" stroke-width="1.7"/><path d="M44.8 1237.1 H58.8" stroke="#55575c" stroke-width="1.2"/><path d="M39.6 1234.2 L42.4 1237.1 L39.6 1240" fill="none" stroke="#2f3034" stroke-width="1.5"/><circle cx="2177" cy="125.5" r="9.2" fill="none" stroke="#1e1f22" stroke-width="1.7"/><path d="M2183.6 132.2 L2190.4 139" stroke="#1e1f22" stroke-width="1.7" stroke-linecap="round"/><path d="M2221.4 118.2 H2242.6 Q2245.6 118.2 2243.6 120.6 L2234.6 131.4 V140.6 Q2234.6 142.6 2232.8 141.8 L2230.6 140.8 Q2229.6 140.4 2229.6 139.2 V131.4 L2220.4 120.6 Q2218.4 118.2 2221.4 118.2 Z" fill="none" stroke="#1e1f22" stroke-width="1.6" stroke-linejoin="round"/><path d="M2282 126.4 V121.2 Q2282 119.3 2283.9 119.3 H2299.7 Q2301.6 119.3 2301.6 121.2 V140.5 Q2301.6 142.4 2299.7 142.4 H2296.8" fill="none" stroke="#1e1f22" stroke-width="1.6"/><path d="M2286.6 124.4 H2297.4 M2288.8 127.6 H2297.4" stroke="#1e1f22" stroke-width="1.6" stroke-linecap="round"/><circle cx="2285" cy="138.2" r="6.7" fill="none" stroke="#1e1f22" stroke-width="1.6"/><path d="M2285 141.4 V134.8 M2283.2 136.6 L2285 134.8 L2286.8 136.6" fill="none" stroke="#1e1f22" stroke-width="1.3"/><rect x="2335.7" y="120" width="22.2" height="22.2" rx="2.6" fill="none" stroke="#1e1f22" stroke-width="1.6"/><path d="M2335.7 126.2 H2357.9 M2343.2 120 V142.2 M2350.4 120 V142.2" stroke="#1e1f22" stroke-width="1.6"/><rect x="-2.6" y="-11" width="5.2" height="22" rx="2.6" transform="translate(586.3 281.8) rotate(45)" fill="none" stroke="#2f6fe6" stroke-width="1.3"/><path d="M590.3 274.6 L594 278.3" stroke="#2f6fe6" stroke-width="1.1"/></svg>
</div></body></html>
